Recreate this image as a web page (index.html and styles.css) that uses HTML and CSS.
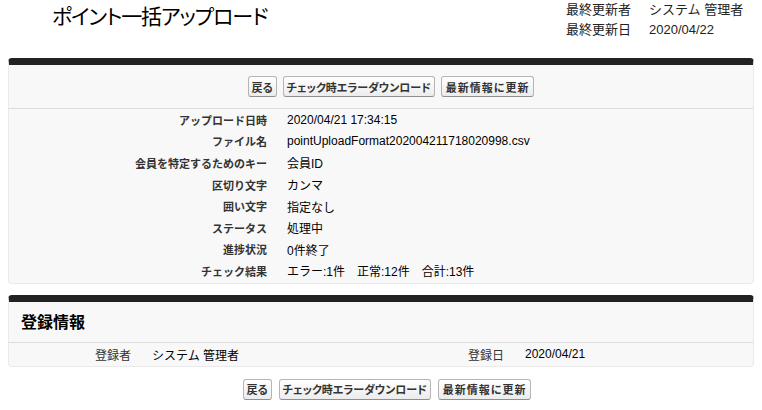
FILE: index.html
```html
<!DOCTYPE html>
<html lang="ja">
<head>
    <meta charset="UTF-8">
    <title>ポイント一括アップロード</title>
    <link rel="stylesheet" href="styles.css">
</head>
<body>
    <div class="page-header">
        <h1 class="page-title">ポイント一括アップロード</h1>
        <div class="update-info">
            <span class="update-label">最終更新者</span><span>システム 管理者</span>
            <span class="update-label">最終更新日</span><span>2020/04/22</span>
        </div>
    </div>

    <div class="block">
        <div class="block-buttons top-buttons">
            <button class="btn">戻る</button>
            <button class="btn">チェック時エラーダウンロード</button>
            <button class="btn btn-wide">最新情報に更新</button>
        </div>
        <div class="detail-list">
            <div class="detail-row"><div class="label">アップロード日時</div><div class="value">2020/04/21 17:34:15</div></div>
            <div class="detail-row"><div class="label">ファイル名</div><div class="value">pointUploadFormat202004211718020998.csv</div></div>
            <div class="detail-row"><div class="label">会員を特定するためのキー</div><div class="value">会員ID</div></div>
            <div class="detail-row"><div class="label">区切り文字</div><div class="value">カンマ</div></div>
            <div class="detail-row"><div class="label">囲い文字</div><div class="value">指定なし</div></div>
            <div class="detail-row"><div class="label">ステータス</div><div class="value">処理中</div></div>
            <div class="detail-row"><div class="label">進捗状況</div><div class="value">0件終了</div></div>
            <div class="detail-row"><div class="label">チェック結果</div><div class="value">エラー:1件　正常:12件　合計:13件</div></div>
        </div>
    </div>

    <div class="block">
        <div class="block-title">登録情報</div>
        <div class="info-row">
            <div class="label">登録者</div><div class="value">システム 管理者</div>
            <div class="label">登録日</div><div class="value">2020/04/21</div>
        </div>
    </div>

    <div class="page-buttons">
        <button class="btn">戻る</button>
        <button class="btn">チェック時エラーダウンロード</button>
        <button class="btn btn-wide">最新情報に更新</button>
    </div>
</body>
</html>
```

FILE: styles.css
```css
body {
    margin: 0;
    font-family: 'Liberation Sans', 'Noto Sans CJK JP', sans-serif;
    font-size: 12px;
    color: #000;
    background-color: #fff;
}
.page-header {
    display: flex;
    align-items: flex-start;
    height: 58px;
}
.page-title {
    width: 514px;
    margin: 0;
    padding-left: 52px;
    font-family: 'Noto Sans CJK JP', sans-serif;
    font-size: 21px;
    font-weight: normal;
    line-height: 31px;
    letter-spacing: -1.1px;
    font-feature-settings: "palt";
}
.update-info {
    display: grid;
    grid-template-columns: 83px auto;
    align-content: start;
    font-size: 13px;
    line-height: 20px;
    color: #222;
}
.block {
    margin: 0 8px 11px;
    background-color: #f8f8f8;
    border: 1px solid #eaeaea;
    border-top: 7px solid #222;
    border-radius: 4px;
}
.block-buttons {
    display: flex;
    justify-content: center;
    gap: 6px;
    height: 43px;
    align-items: center;
    padding-left: 20px;
    border-bottom: 1px solid #dcdcdc;
}
.btn {
    font-family: 'Noto Sans CJK JP', sans-serif;
    font-size: 11px;
    font-weight: bold;
    color: #333;
    height: 21px;
    padding: 0 3px;
    background: linear-gradient(#ffffff, #ececec);
    border: 1px solid #b5b5b5;
    border-bottom-color: #8f8f8f;
    border-radius: 3px;
    font-feature-settings: "palt";
    cursor: pointer;
}
.btn-wide {
    letter-spacing: 1px;
    padding: 0 4px;
}
.detail-list {
    padding: 0 0 1px;
}
.detail-row {
    display: grid;
    grid-template-columns: 258px 1fr;
    column-gap: 20px;
    align-items: center;
    height: 21.6px;
}
.label {
    text-align: right;
    font-size: 11px;
    font-weight: bold;
    color: #333;
}
.value {
    font-size: 12px;
}
.block-title {
    height: 40px;
    line-height: 38px;
    padding-left: 12px;
    font-family: 'Noto Sans CJK JP', sans-serif;
    font-size: 16px;
    font-weight: bold;
    border-bottom: 1px solid #dcdcdc;
}
.info-row {
    display: grid;
    grid-template-columns: 122px 210px 121px 1fr;
    column-gap: 21px;
    align-items: center;
    height: 23px;
}
.info-row .label {
    font-size: 12px;
    font-weight: normal;
    color: #333;
}
.page-buttons {
    display: flex;
    justify-content: center;
    gap: 7px;
    padding-left: 12px;
    margin-top: 12px;
}
```
